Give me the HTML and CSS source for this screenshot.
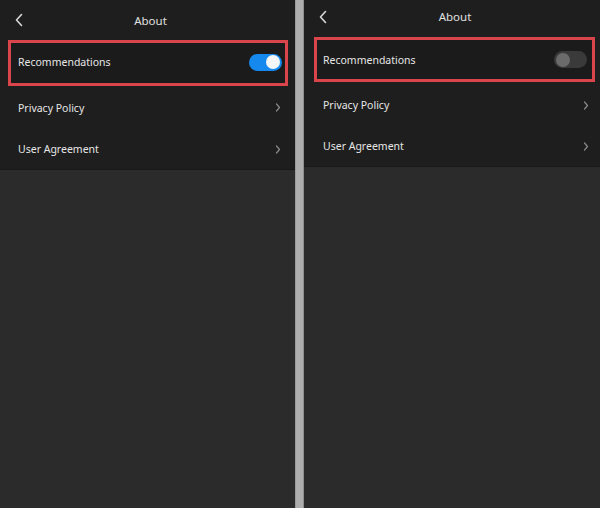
FILE: index.html
```html
<!DOCTYPE html>
<html>
<head>
<meta charset="utf-8">
<link rel="stylesheet" href="styles.css">
</head>
<body>
<div class="screens">
  <section class="panel panel-left">
    <header class="topbar">
      <svg class="back" width="10" height="14" viewBox="0 0 10 14"><path d="M7.5 1.5 L2.5 7 L7.5 12.5" fill="none" stroke="#d8d8d8" stroke-width="1.6" stroke-linecap="round" stroke-linejoin="round"/></svg>
      <span class="title">About</span>
    </header>
    <div class="list">
      <div class="row row-highlight">
        <span class="label">Recommendations</span>
        <span class="toggle toggle-on"><span class="knob"></span></span>
      </div>
      <div class="row row-privacy">
        <span class="label">Privacy Policy</span>
        <svg class="chev" width="6" height="9" viewBox="0 0 6 9"><path d="M1.5 1 L4.5 4.5 L1.5 8" fill="none" stroke="#8a8a8a" stroke-width="1.2" stroke-linecap="round" stroke-linejoin="round"/></svg>
      </div>
      <div class="row row-agree">
        <span class="label">User Agreement</span>
        <svg class="chev" width="6" height="9" viewBox="0 0 6 9"><path d="M1.5 1 L4.5 4.5 L1.5 8" fill="none" stroke="#8a8a8a" stroke-width="1.2" stroke-linecap="round" stroke-linejoin="round"/></svg>
      </div>
    </div>
    <div class="rest"></div>
  </section>
  <div class="divider"></div>
  <section class="panel panel-right">
    <header class="topbar">
      <svg class="back" width="10" height="14" viewBox="0 0 10 14"><path d="M7.5 1.5 L2.5 7 L7.5 12.5" fill="none" stroke="#d8d8d8" stroke-width="1.6" stroke-linecap="round" stroke-linejoin="round"/></svg>
      <span class="title">About</span>
    </header>
    <div class="list">
      <div class="row row-highlight">
        <span class="label">Recommendations</span>
        <span class="toggle toggle-off"><span class="knob"></span></span>
      </div>
      <div class="row row-privacy">
        <span class="label">Privacy Policy</span>
        <svg class="chev" width="6" height="9" viewBox="0 0 6 9"><path d="M1.5 1 L4.5 4.5 L1.5 8" fill="none" stroke="#8a8a8a" stroke-width="1.2" stroke-linecap="round" stroke-linejoin="round"/></svg>
      </div>
      <div class="row row-agree">
        <span class="label">User Agreement</span>
        <svg class="chev" width="6" height="9" viewBox="0 0 6 9"><path d="M1.5 1 L4.5 4.5 L1.5 8" fill="none" stroke="#8a8a8a" stroke-width="1.2" stroke-linecap="round" stroke-linejoin="round"/></svg>
      </div>
    </div>
    <div class="rest"></div>
  </section>
</div>
</body>
</html>
```
FILE: styles.css
```css
* { box-sizing: border-box; }
html, body { margin: 0; padding: 0; }
body {
  width: 600px;
  height: 508px;
  overflow: hidden;
  background: #2b2b2b;
  font-family: "Noto Sans", "Open Sans", sans-serif;
  color: #e8e8e8;
}
.screens {
  display: flex;
  height: 508px;
}
.panel {
  display: flex;
  flex-direction: column;
  background: #2b2b2b;
}
.panel-left { width: 295px; }
.panel-right { flex: 1; }
.divider {
  width: 9px;
  background: #adadad;
  border-left: 1px solid #9a9a9a;
  border-right: 1px solid #8e8e8e;
}
.topbar {
  position: relative;
  display: flex;
  align-items: center;
  justify-content: center;
  background: #1e1e1e;
}
.panel-left .topbar { height: 40px; }
.panel-right .topbar { height: 36px; padding-bottom: 3px; }
.back {
  position: absolute;
  top: 50%;
  transform: translateY(-50%);
}
.panel-left .back { left: 14px; }
.panel-right .back { left: 14px; margin-top: -1px; }
.title {
  font-size: 11.5px;
  color: #e0e0e0;
}
.panel-left .title { margin-left: 6px; }
.panel-right .title { margin-left: 6px; }
.list {
  background: #1e1e1e;
  display: flex;
  flex-direction: column;
  border-bottom: 1px solid #181818;
}
.row {
  display: flex;
  align-items: center;
  justify-content: space-between;
  font-size: 10.5px;
  color: #e6e6e6;
}
.row-highlight {
  border: 3px solid #d9454b;
  background: #1b1b1b;
}
.panel-left .row-highlight {
  height: 46px;
  margin: 0 7px 0 8px;
  padding: 0 3px 2px 7px;
}
.panel-right .row-highlight {
  height: 45px;
  margin: 1px 5px 0 10px;
  padding: 0 5px 0 6px;
}
.panel-left .row-privacy, .panel-left .row-agree {
  padding: 0 14px 0 18px;
}
.panel-right .row-privacy, .panel-right .row-agree {
  padding: 0 11px 0 19px;
}
.panel-left .row-privacy { height: 43px; }
.panel-left .row-agree { height: 40px; }
.panel-right .row-privacy { height: 44px; padding-top: 2px; }
.panel-right .row-agree { height: 40px; }
.toggle {
  position: relative;
  display: block;
  width: 33px;
  height: 17px;
  border-radius: 9px;
}
.toggle .knob {
  position: absolute;
  top: 1.5px;
  width: 14px;
  height: 14px;
  border-radius: 50%;
}
.toggle-on { background: #1589ee; }
.toggle-on .knob { right: 2px; background: #f4f6f8; }
.toggle-off { background: #3a3a3a; }
.toggle-off .knob { left: 2px; background: #6b6b6b; }
.rest {
  flex: 1;
  background: #2b2b2b;
}
```
